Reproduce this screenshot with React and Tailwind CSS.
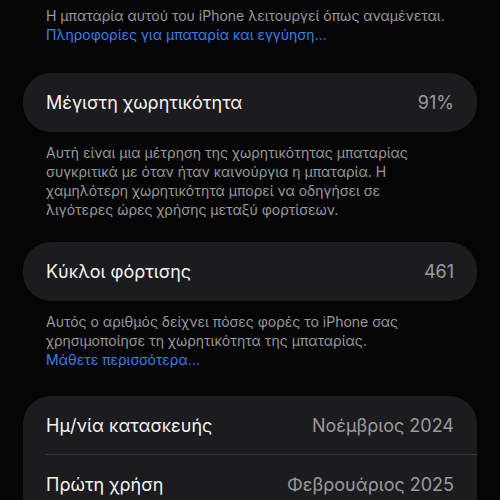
const font = { fontFamily: 'Inter, "Noto Sans", sans-serif' };

function Row({ label, value, divider }) {
    return (
        <div className="pl-[23px]">
            <div className={"flex items-center justify-between pr-[23px] h-[59px]" + (divider ? " border-b border-[#38383a]" : "")}>
                <span className="text-[18px] text-[#f2f2f2]">{label}</span>
                <span className="text-[18px] text-[#9a9a9e]">{value}</span>
            </div>
        </div>
    );
}

function Caption({ children }) {
    return (
        <p className="px-[46px] text-[14px] leading-[19px] text-[#9a9a9e] whitespace-nowrap">{children}</p>
    );
}

export default function App() {
    return (
        <div className="w-[500px] h-[500px] overflow-hidden bg-[#050505]" style={font}>
            <div className="pt-[6px]">
                <Caption>
                    Η μπαταρία αυτού του iPhone λειτουργεί όπως αναμένεται.
                    <br />
                    <span className="text-[#3b7ff0]">Πληροφορίες για μπαταρία και εγγύηση…</span>
                </Caption>
            </div>

            <div className="mx-[23px] mt-[29px] rounded-[28px] bg-[#1c1c1e]">
                <Row label="Μέγιστη χωρητικότητα" value="91%" />
            </div>

            <div className="pt-[11px]">
                <Caption>
                    Αυτή είναι μια μέτρηση της χωρητικότητας μπαταρίας
                    <br />
                    συγκριτικά με όταν ήταν καινούργια η μπαταρία. Η
                    <br />
                    χαμηλότερη χωρητικότητα μπορεί να οδηγήσει σε
                    <br />
                    λιγότερες ώρες χρήσης μεταξύ φορτίσεων.
                </Caption>
            </div>

            <div className="mx-[23px] mt-[23px] rounded-[28px] bg-[#1c1c1e]">
                <Row label="Κύκλοι φόρτισης" value="461" />
            </div>

            <div className="pt-[11px]">
                <Caption>
                    Αυτός ο αριθμός δείχνει πόσες φορές το iPhone σας
                    <br />
                    χρησιμοποίησε τη χωρητικότητα της μπαταρίας.
                    <br />
                    <span className="text-[#3b7ff0]">Μάθετε περισσότερα…</span>
                </Caption>
            </div>

            <div className="mx-[23px] mt-[27px] rounded-[28px] bg-[#1c1c1e] pb-[20px]">
                <Row label="Ημ/νία κατασκευής" value="Νοέμβριος 2024" divider />
                <Row label="Πρώτη χρήση" value="Φεβρουάριος 2025" />
            </div>
        </div>
    );
}
